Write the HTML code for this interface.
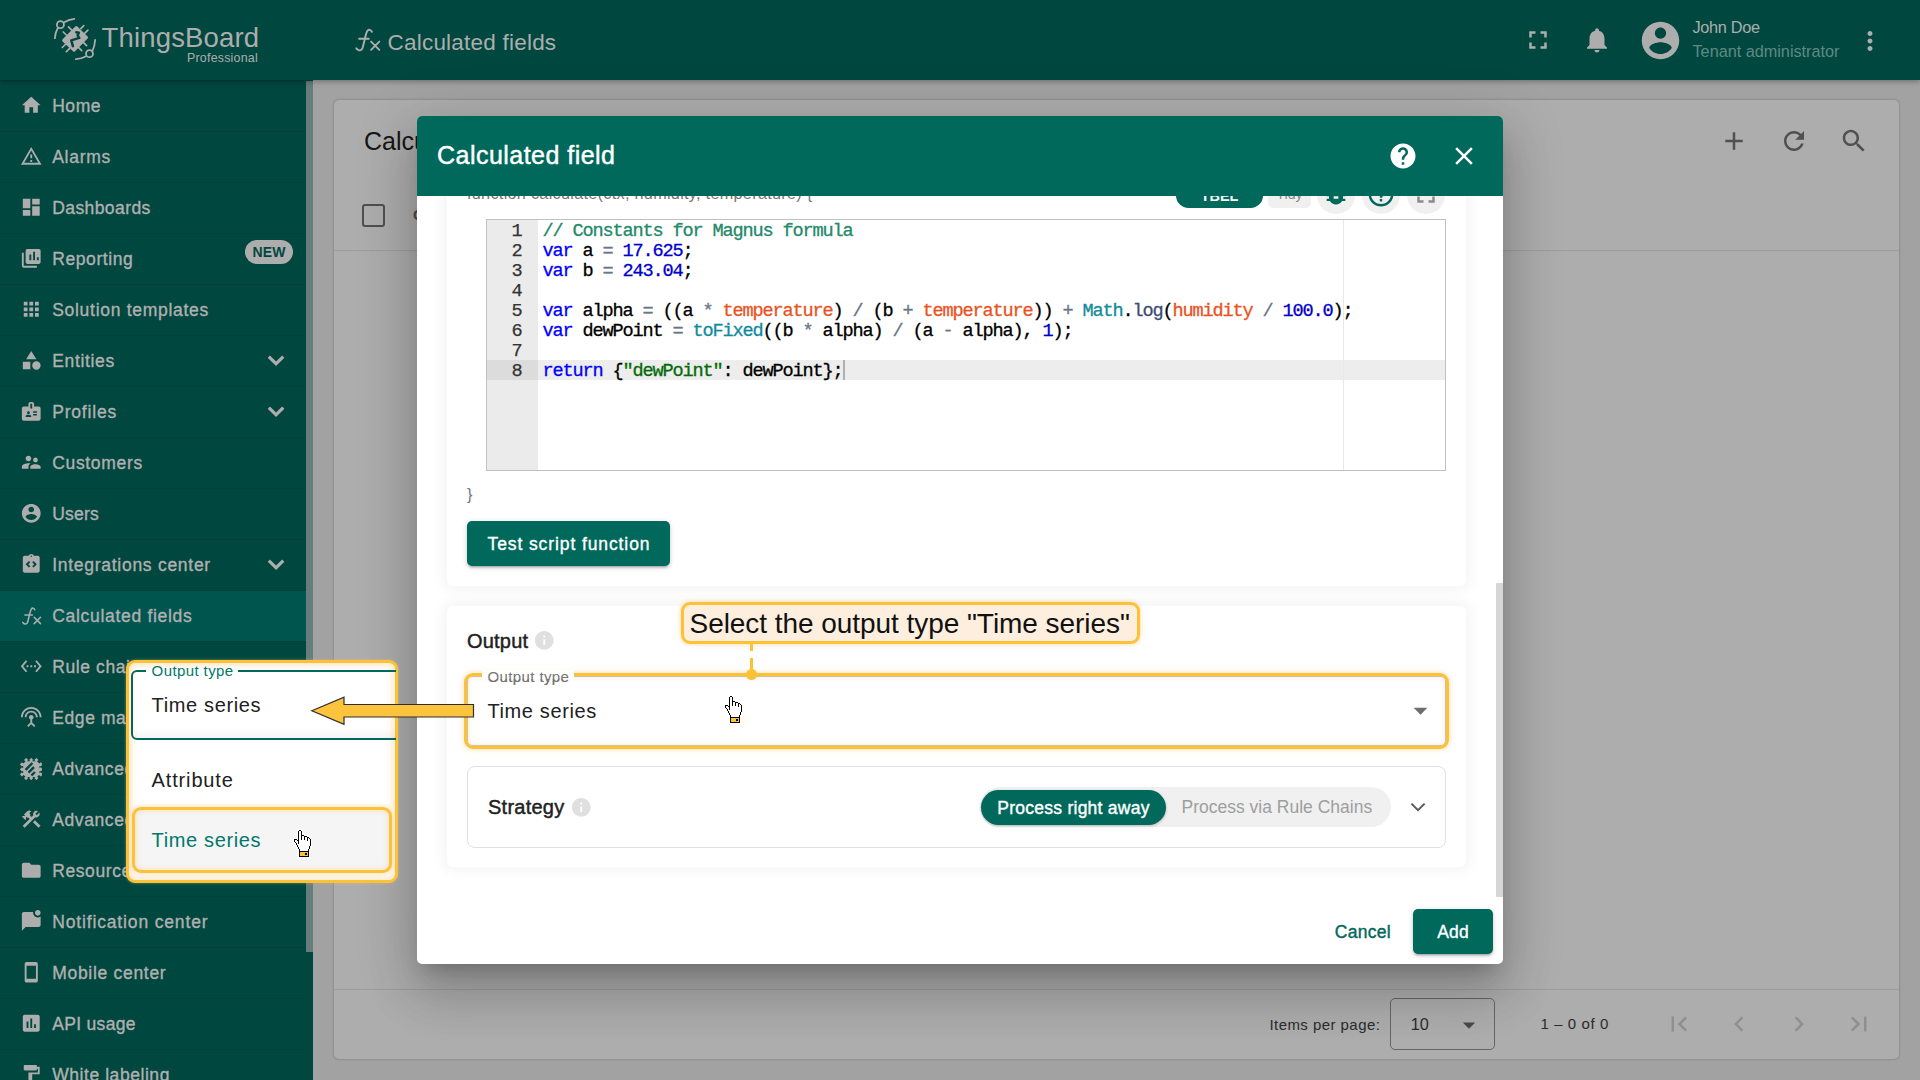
<!DOCTYPE html>
<html><head><meta charset="utf-8"><title>Calculated fields</title>
<style>
*{box-sizing:border-box}
html,body{margin:0;padding:0}
body{width:1920px;height:1080px;overflow:hidden;position:relative;background:#a2a2a2;font-family:"Liberation Sans",sans-serif;color:#222}
.abs{position:absolute}
svg{display:block}
/* ---------- top bar ---------- */
#topbar{position:absolute;left:0;top:0;width:1920px;height:80px;background:#00473f;z-index:5;box-shadow:0 2px 5px rgba(0,0,0,.28)}
#topbar svg{fill:#adadad;position:absolute}
.tb-title{position:absolute;left:387.5px;top:29px;font-size:22.5px;line-height:28px;color:#adadad;letter-spacing:.22px;white-space:nowrap}
.usr1{position:absolute;left:1692.5px;top:17px;font-size:16.3px;line-height:20px;color:#adadad;white-space:nowrap;letter-spacing:-.3px}
.usr2{position:absolute;left:1692.5px;top:41px;font-size:16.3px;line-height:20px;color:#5f8a84;white-space:nowrap;letter-spacing:-.03px}
.logo-t{position:absolute;left:101.5px;top:22px;font-size:27.5px;line-height:32px;color:#adadad;white-space:nowrap;letter-spacing:.17px}
.logo-p{position:absolute;left:187px;top:51px;font-size:12.4px;line-height:14px;color:#adadad;white-space:nowrap;letter-spacing:.23px}
/* ---------- sidebar ---------- */
#side{position:absolute;left:0;top:80px;width:306px;height:1000px;background:#00473f;z-index:2}
#sidescroll{position:absolute;left:306px;top:81px;width:7px;height:870.500px;background:#657e7b;z-index:2}
#sidetrack{position:absolute;left:306px;top:80px;width:7px;height:1000px;background:#00473f;z-index:1}
.row{position:absolute;left:0;width:306px;height:51px;border-top:1px solid #00423a;color:#b0b0b0;z-index:3}
.row.act{background:#00554f}
.row .ic{position:absolute;left:20px;top:13.100px;width:22.5px;height:22.5px;fill:#adadad;color:#adadad}
.row .lbl{position:absolute;left:52.2px;top:14px;font-size:17.5px;line-height:22px;white-space:nowrap;-webkit-text-stroke:.35px #b0b0b0}
.row .chev{position:absolute;left:260.5px;top:10px;width:30px;height:30px;fill:#adadad}
.new{position:absolute;left:244.700px;top:5.7px;width:48.6px;height:24.5px;border-radius:13px;background:#adadad;color:#00473f;font-weight:700;font-size:14px;line-height:25px;text-align:center;letter-spacing:.1px}
/* ---------- page card ---------- */
#card{position:absolute;left:334px;top:100px;width:1565px;height:959px;background:#adadad;border-radius:5px;box-shadow:0 0 2.500px rgba(0,0,0,.3)}
.hline{position:absolute;left:0;width:100%;height:1px;background:#9c9c9c}
#card svg{position:absolute;fill:#505050}
</style></head>
<body>
<!-- sidebar -->
<div id="side"></div><div id="sidetrack"></div><div id="sidescroll"></div>
<div class="row" style="top:80px"><svg class="ic" viewBox="0 0 24 24"><path d="M10 20v-6h4v6h5v-8h3L12 3 2 12h3v8z"/></svg><span class="lbl" style="letter-spacing:0.537px">Home</span></div>
<div class="row" style="top:131px"><svg class="ic" viewBox="0 0 24 24"><path d="M12 5.99L19.53 19H4.47L12 5.99M12 2L1 21h22L12 2zm1 14h-2v2h2v-2zm0-6h-2v4h2v-4z"/></svg><span class="lbl" style="letter-spacing:0.729px">Alarms</span></div>
<div class="row" style="top:182px"><svg class="ic" viewBox="0 0 24 24"><path d="M3 13h8V3H3v10zm0 8h8v-6H3v6zm10 0h8V11h-8v10zm0-18v6h8V3h-8z"/></svg><span class="lbl" style="letter-spacing:0.414px">Dashboards</span></div>
<div class="row" style="top:233px"><svg class="ic" viewBox="0 0 24 24"><path d="M4 6H2v14c0 1.1.9 2 2 2h14v-2H4V6zM20 2H8c-1.1 0-2 .9-2 2v12c0 1.1.9 2 2 2h12c1.1 0 2-.9 2-2V4c0-1.1-.9-2-2-2zM12 14h-2V8h2v6zm4 0h-2V5h2v9zm4 0h-2v-3h2v3z"/></svg><span class="lbl" style="letter-spacing:0.589px">Reporting</span><span class="new">NEW</span></div>
<div class="row" style="top:284px"><svg class="ic" viewBox="0 0 24 24"><path d="M4 8h4V4H4v4zm6 12h4v-4h-4v4zm-6 0h4v-4H4v4zm0-6h4v-4H4v4zm6 0h4v-4h-4v4zm6-10v4h4V4h-4zm-6 4h4V4h-4v4zm6 6h4v-4h-4v4zm0 6h4v-4h-4v4z"/></svg><span class="lbl" style="letter-spacing:0.713px">Solution templates</span></div>
<div class="row" style="top:335px"><svg class="ic" viewBox="0 0 24 24"><path d="M12 2l-5.5 9h11zM17.5 13a4.5 4.5 0 1 0 0 9 4.5 4.5 0 1 0 0-9zM3 13.5h8v8H3z"/></svg><span class="lbl" style="letter-spacing:0.658px">Entities</span><svg class="chev" viewBox="0 0 30 30"><path d="M8.960 9.500L15.050 15.600 21.140 9.500 23.400 11.750 15.050 20.100 6.700 11.750z"/></svg></div>
<div class="row" style="top:386px"><svg class="ic" viewBox="0 0 24 24"><path d="M20 7h-5V4c0-1.1-.9-2-2-2h-2c-1.1 0-2 .9-2 2v3H4c-1.1 0-2 .9-2 2v11c0 1.1.9 2 2 2h16c1.1 0 2-.9 2-2V9c0-1.1-.9-2-2-2zM9 12c.83 0 1.5.67 1.5 1.5S9.83 15 9 15s-1.5-.67-1.5-1.5S8.17 12 9 12zm3 6H6v-.75c0-1 2-1.5 3-1.5s3 .5 3 1.5V18zm1-9h-2V4h2v5zm5 7.5h-4V15h4v1.5zm0-3h-4V12h4v1.5z"/></svg><span class="lbl" style="letter-spacing:0.806px">Profiles</span><svg class="chev" viewBox="0 0 30 30"><path d="M8.960 9.500L15.050 15.600 21.140 9.500 23.400 11.750 15.050 20.100 6.700 11.750z"/></svg></div>
<div class="row" style="top:437px"><svg class="ic" viewBox="0 0 24 24"><path d="M16.5 12c1.38 0 2.49-1.12 2.49-2.5S17.88 7 16.5 7C15.12 7 14 8.12 14 9.5s1.12 2.5 2.5 2.5zM9 11c1.66 0 2.99-1.34 2.99-3S10.66 5 9 5C7.34 5 6 6.34 6 8s1.34 3 3 3zm7.5 3c-1.83 0-5.5.92-5.5 2.75V19h11v-2.25c0-1.83-3.67-2.75-5.5-2.75zM9 13c-2.33 0-7 1.17-7 3.5V19h7v-2.25c0-.85.33-2.34 2.37-3.47C10.5 13.1 9.66 13 9 13z"/></svg><span class="lbl" style="letter-spacing:0.674px">Customers</span></div>
<div class="row" style="top:488px"><svg class="ic" viewBox="0 0 24 24"><path d="M12 2C6.48 2 2 6.48 2 12s4.48 10 10 10 10-4.48 10-10S17.52 2 12 2zm0 3c1.66 0 3 1.34 3 3s-1.34 3-3 3-3-1.34-3-3 1.34-3 3-3zm0 14.2c-2.5 0-4.71-1.28-6-3.22.03-1.99 4-3.08 6-3.08 1.99 0 5.97 1.09 6 3.08-1.29 1.94-3.5 3.22-6 3.22z"/></svg><span class="lbl" style="letter-spacing:0.224px">Users</span></div>
<div class="row" style="top:539px"><svg class="ic" viewBox="0 0 24 24"><path d="M19 3h-4.18C14.4 1.84 13.3 1 12 1s-2.4.84-2.82 2H5c-1.1 0-2 .9-2 2v14c0 1.1.9 2 2 2h14c1.1 0 2-.9 2-2V5c0-1.1-.9-2-2-2zm-8 11.17l-1.41 1.42L6 12l3.59-3.59L11 9.83 8.83 12 11 14.17zm1-9.92c-.41 0-.75-.34-.75-.75s.34-.75.75-.75.75.34.75.75-.34.75-.75.75zm2.41 11.34L13 14.17 15.17 12 13 9.83l1.41-1.42L18 12l-3.59 3.59z"/></svg><span class="lbl" style="letter-spacing:0.725px">Integrations center</span><svg class="chev" viewBox="0 0 30 30"><path d="M8.960 9.500L15.050 15.600 21.140 9.500 23.400 11.750 15.050 20.100 6.700 11.750z"/></svg></div>
<div class="row act" style="top:590px"><svg class="ic" style="left:20.800px;top:15.100px;width:21.600px;height:21.600px" viewBox="0 0 28 28"><path d="M17.900 4.900c-.7-2.300-3.300-2.900-4.600-.9-.9 1.400-1.400 3.600-2 6l-2.300 9.500c-.7 2.900-2 4.300-3.800 3.800-1.200-.3-2.100-1-2.900-2M5.100 11.750h9.650M17.100 14.600l8.200 8.200M25.300 14.600l-8.200 8.200" fill="none" stroke="currentColor" stroke-width="2" stroke-linecap="round" stroke-linejoin="round"/></svg><span class="lbl" style="letter-spacing:0.700px">Calculated fields</span></div>
<div class="row" style="top:641px"><svg class="ic" viewBox="0 0 24 24"><path d="M7.77 6.76L6.23 5.48.82 12l5.41 6.52 1.54-1.28L3.42 12l4.35-5.24zM7 13h2v-2H7v2zm10-2h-2v2h2v-2zm-6 2h2v-2h-2v2zm6.77-7.52l-1.54 1.28L20.58 12l-4.35 5.24 1.54 1.28L23.18 12l-5.41-6.52z"/></svg><span class="lbl" style="letter-spacing:0.600px">Rule chains</span></div>
<div class="row" style="top:692px"><svg class="ic" viewBox="0 0 24 24"><path d="M12 5c-3.87 0-7 3.13-7 7h2c0-2.76 2.24-5 5-5s5 2.24 5 5h2c0-3.87-3.13-7-7-7zm1 9.29c.88-.39 1.5-1.26 1.5-2.29 0-1.38-1.12-2.5-2.5-2.5S9.500 10.62 9.500 12c0 1.02.62 1.9 1.5 2.29v3.3L7.590 21 9 22.410l3-3 3 3L16.410 21 13 17.590v-3.300zM12 1C5.930 1 1 5.930 1 12h2c0-4.970 4.030-9 9-9s9 4.030 9 9h2c0-6.070-4.930-11-11-11z"/></svg><span class="lbl" style="letter-spacing:0.600px">Edge management</span><svg class="chev" viewBox="0 0 30 30"><path d="M8.960 9.500L15.050 15.600 21.140 9.500 23.400 11.750 15.050 20.100 6.700 11.750z"/></svg></div>
<div class="row" style="top:743px"><svg class="ic" style="left:19.9px;top:14px;width:22.6px;height:22px" viewBox="0 0 22.600 22"><path d="M5.700 3.200h11.300l2.500 2.500v10.800l-2.500 2.500H5.700l-2.500-2.500V5.700zM6.1 -0.10l2.1 2.1-2.1 2.1-2.1-2.1zM6.1 18.00l2.1 2.1-2.1 2.1-2.1-2.1zM11.2 -0.10l2.1 2.1-2.1 2.1-2.1-2.1zM11.2 18.00l2.1 2.1-2.1 2.1-2.1-2.1zM16.4 -0.10l2.1 2.1-2.1 2.1-2.1-2.1zM16.4 18.00l2.1 2.1-2.1 2.1-2.1-2.1zM2.0 4.20l2.1 2.1-2.1 2.1-2.1-2.1zM20.7 4.20l2.1 2.1-2.1 2.1-2.1-2.1zM2.0 9.20l2.1 2.1-2.1 2.1-2.1-2.1zM20.7 9.20l2.1 2.1-2.1 2.1-2.1-2.1zM2.0 14.30l2.1 2.1-2.1 2.1-2.1-2.1zM20.7 14.30l2.1 2.1-2.1 2.1-2.1-2.1z"/><path d="M5.600 11.800l6.800-6.800M8.500 14.700l5.500-5.500M11.400 17.500l3.500-3.500" fill="none" stroke="#00473f" stroke-width="2.400"/></svg><span class="lbl" style="letter-spacing:0.600px">Advanced features</span><svg class="chev" viewBox="0 0 30 30"><path d="M8.960 9.500L15.050 15.600 21.140 9.500 23.400 11.750 15.050 20.100 6.700 11.750z"/></svg></div>
<div class="row" style="top:794px"><svg class="ic" viewBox="0 0 24 24"><path d="M13.783 15.172l2.121-2.121 5.996 5.996-2.121 2.121zM17.5 10c1.930 0 3.500-1.570 3.500-3.500 0-.58-.16-1.120-.41-1.600l-2.700 2.700-1.490-1.490 2.700-2.700c-.48-.25-1.020-.41-1.600-.41C15.570 3 14 4.570 14 6.500c0 .41.080.8.21 1.160l-1.850 1.850-1.780-1.780.71-.71-1.410-1.410L12 3.490c-1.170-1.170-3.070-1.170-4.240 0L4.220 7.030l1.410 1.410H2.810l-.71.71 3.540 3.540.71-.71V9.150l1.410 1.410.71-.71 1.780 1.780-7.410 7.410 2.120 2.120L16.340 9.790c.36.13.75.21 1.160.21z"/></svg><span class="lbl" style="letter-spacing:0.600px">Advanced settings</span><svg class="chev" viewBox="0 0 30 30"><path d="M8.960 9.500L15.050 15.600 21.140 9.500 23.400 11.750 15.050 20.100 6.700 11.750z"/></svg></div>
<div class="row" style="top:845px"><svg class="ic" viewBox="0 0 24 24"><path d="M10 4H4c-1.1 0-1.99.9-1.99 2L2 18c0 1.1.9 2 2 2h16c1.1 0 2-.9 2-2V8c0-1.1-.9-2-2-2h-8l-2-2z"/></svg><span class="lbl" style="letter-spacing:0.600px">Resources</span><svg class="chev" viewBox="0 0 30 30"><path d="M8.960 9.500L15.050 15.600 21.140 9.500 23.400 11.750 15.050 20.100 6.700 11.750z"/></svg></div>
<div class="row" style="top:896px"><svg class="ic" viewBox="0 0 24 24"><path d="M22 6.98V16c0 1.1-.9 2-2 2H6l-4 4V4c0-1.1.9-2 2-2h10.1c-.06.32-.1.66-.1 1 0 2.760 2.240 5 5 5 1.130 0 2.160-.39 3-1.020zM16 3c0 1.660 1.340 3 3 3s3-1.340 3-3-1.340-3-3-3-3 1.340-3 3z"/></svg><span class="lbl" style="letter-spacing:0.851px">Notification center</span></div>
<div class="row" style="top:947px"><svg class="ic" viewBox="0 0 24 24"><path d="M17 1.01L7 1c-1.1 0-2 .9-2 2v18c0 1.1.9 2 2 2h10c1.1 0 2-.9 2-2V3c0-1.1-.9-1.99-2-1.990zM17 19H7V5h10v14z"/></svg><span class="lbl" style="letter-spacing:0.703px">Mobile center</span></div>
<div class="row" style="top:998px"><svg class="ic" viewBox="0 0 24 24"><path d="M19 3H5c-1.1 0-2 .9-2 2v14c0 1.1.9 2 2 2h14c1.1 0 2-.9 2-2V5c0-1.1-.9-2-2-2zM9 17H7v-7h2v7zm4 0h-2V7h2v10zm4 0h-2v-4h2v4z"/></svg><span class="lbl" style="letter-spacing:0.319px">API usage</span></div>
<div class="row" style="top:1049px"><svg class="ic" viewBox="0 0 24 24"><path d="M18 4V3c0-.55-.45-1-1-1H5c-.55 0-1 .45-1 1v4c0 .55.45 1 1 1h12c.55 0 1-.45 1-1V6h1v4H9v11c0 .55.45 1 1 1h2c.55 0 1-.45 1-1v-9h8V4h-3z"/></svg><span class="lbl" style="letter-spacing:0.560px">White labeling</span></div>
<!-- top bar -->
<div id="topbar">
  <svg style="left:48px;top:12px;width:56px;height:56px" viewBox="0 0 56 56"><g fill="none" stroke="#adadad" stroke-width="1.8" stroke-linecap="round">
<circle cx="12.4" cy="12.7" r="3.500"/><path d="M15.800 10.400C19 8.400 22.500 7.300 26.300 6.900M9.800 16C8.100 19 7.100 22.500 6.900 26.200"/>
<circle cx="41.500" cy="41.700" r="3.500"/><path d="M44.400 38.800C46 35.600 46.900 32 47.100 28M38.200 44.300C35 46 31.500 47 27.900 47.200"/>
<path d="M20.500 14.800l3 3M15.300 20l3 3M35.800 13.700l-3 3M39.900 18.100l-3 3M38.600 33.700l-3-3M33.700 38.600l-3-3M14.300 35.500l3-3M18.400 39.700l3-3" stroke-width="1.700"/></g>
<path d="M27.300 14.600a1.500 1.500 0 0 1 2.100 0L39.600 24.500a1.500 1.500 0 0 1 0 2.100L27.100 39.300a1.500 1.500 0 0 1-2.100 0L14.600 29.400a1.500 1.500 0 0 1 0-2.100z" fill="#adadad" stroke="none"/>
<path d="M28.300 20.300l2.600.5-1.300 2.600 1.700 2.500-8 2.500 1.600 5.700" fill="none" stroke="#00473f" stroke-width="2.500" stroke-linecap="round" stroke-linejoin="round"/></svg>
  <div class="logo-t">ThingsBoard</div>
  <div class="logo-p">Professional</div>
  <svg style="left:354px;top:27px;width:28px;height:28px" viewBox="0 0 28 28"><path d="M17.900 4.900c-.7-2.300-3.300-2.900-4.600-.9-.9 1.400-1.400 3.600-2 6l-2.300 9.500c-.7 2.900-2 4.300-3.800 3.800-1.200-.3-2.100-1-2.900-2M5.100 11.750h9.650M17.100 14.600l8.200 8.200M25.300 14.600l-8.200 8.200" fill="none" stroke="#adadad" stroke-width="1.900" stroke-linecap="round" stroke-linejoin="round"/></svg>
  <div class="tb-title">Calculated fields</div>
  <svg style="left:1522.500px;top:25px;width:30px;height:30px" viewBox="0 0 24 24"><path d="M7 14H5v5h5v-2H7v-3zm-2-4h2V7h3V5H5v5zm12 7h-3v2h5v-5h-2v3zM14 5v2h3v3h2V5h-5z"/></svg>
  <svg style="left:1582px;top:25px;width:30px;height:30px" viewBox="0 0 24 24"><path d="M12 22c1.1 0 2-.9 2-2h-4c0 1.1.89 2 2 2zm6-6v-5c0-3.070-1.640-5.640-4.500-6.320V4c0-.83-.67-1.500-1.500-1.500s-1.500.67-1.500 1.500v.68C7.630 5.360 6 7.920 6 11v5l-2 2v1h16v-1l-2-2z"/></svg>
  <svg style="left:1637.500px;top:18px;width:45px;height:45px" viewBox="0 0 24 24"><path d="M12 2C6.480 2 2 6.480 2 12s4.480 10 10 10 10-4.480 10-10S17.520 2 12 2zm0 3c1.660 0 3 1.340 3 3s-1.340 3-3 3-3-1.340-3-3 1.340-3 3-3zm0 14.200c-2.500 0-4.710-1.280-6-3.220.03-1.990 4-3.080 6-3.080 1.990 0 5.970 1.090 6 3.080-1.290 1.940-3.500 3.220-6 3.220z"/></svg>
  <div class="usr1">John Doe</div>
  <div class="usr2">Tenant administrator</div>
  <svg style="left:1855px;top:25.500px;width:30px;height:30px" viewBox="0 0 24 24"><path d="M12 8c1.1 0 2-.9 2-2s-.9-2-2-2-2 .9-2 2 .9 2 2 2zm0 2c-1.1 0-2 .9-2 2s.9 2 2 2 2-.9 2-2-.9-2-2-2zm0 6c-1.1 0-2 .9-2 2s.9 2 2 2 2-.9 2-2-.9-2-2-2z"/></svg>
</div>
<!-- page card (dimmed) -->
<div id="card">
  <div class="abs" style="left:30px;top:26px;font-size:25px;line-height:30px;color:#161616;white-space:nowrap">Calculated fields</div>
  <svg style="left:1385px;top:26px;width:30px;height:30px" viewBox="0 0 24 24"><path d="M19 13h-6v6h-2v-6H5v-2h6V5h2v6h6v2z"/></svg>
  <svg style="left:1445px;top:26px;width:30px;height:30px" viewBox="0 0 24 24"><path d="M17.650 6.350C16.200 4.900 14.210 4 12 4c-4.420 0-7.990 3.580-7.990 8s3.570 8 7.990 8c3.730 0 6.840-2.550 7.730-6h-2.080c-.82 2.330-3.040 4-5.650 4-3.310 0-6-2.690-6-6s2.690-6 6-6c1.660 0 3.140.69 4.220 1.780L13 11h7V4l-2.350 2.350z"/></svg>
  <svg style="left:1504.800px;top:26px;width:30px;height:30px" viewBox="0 0 24 24"><path d="M15.500 14h-.79l-.28-.27C15.410 12.590 16 11.110 16 9.500 16 5.910 13.090 3 9.500 3S3 5.910 3 9.500 5.910 16 9.500 16c1.610 0 3.090-.59 4.230-1.570l.27.28v.79l5 4.990L20.490 19l-4.990-5zm-6 0C7.010 14 5 11.990 5 9.500S7.010 5 9.500 5 14 7.010 14 9.500 11.990 14 9.500 14z"/></svg>
  <div class="abs" style="left:28px;top:104px;width:23px;height:23px;border:2.500px solid #4f4f4f;border-radius:3px"></div>
  <div class="abs" style="left:79px;top:104px;font-size:15px;line-height:22px;font-weight:700;color:#4a4a4a">Created time</div>
  <div class="hline" style="top:150px"></div>
  <div class="hline" style="top:889px"></div>
    <div class="abs" style="left:935.400px;top:916px;font-size:15px;line-height:18px;color:#2b2b2b;white-space:nowrap;letter-spacing:.45px">Items per page:</div>
  <div class="abs" style="left:1056px;top:898px;width:105px;height:52px;border:1px solid #666;border-radius:5px"></div>
  <div class="abs" style="left:1076.700px;top:914px;font-size:16.250px;line-height:20px;color:#2b2b2b;white-space:nowrap">10</div>
  <svg style="left:1120px;top:910px;width:30px;height:30px" viewBox="0 0 24 24"><path fill="#4a4a4a" d="M7 10l5 5 5-5z"/></svg>
  <div class="abs" style="left:1206.500px;top:915px;font-size:15px;line-height:18px;color:#2b2b2b;white-space:nowrap;letter-spacing:.58px">1 – 0 of 0</div>
  <svg style="left:1330px;top:909px;width:30px;height:30px" viewBox="0 0 24 24"><path fill="#8f8f8f" d="M18.410 16.590L13.820 12l4.590-4.590L17 6l-6 6 6 6zM6 6h2v12H6z"/></svg>
  <svg style="left:1390px;top:909px;width:30px;height:30px" viewBox="0 0 24 24"><path fill="#8f8f8f" d="M15.410 7.410L14 6l-6 6 6 6 1.410-1.410L10.830 12z"/></svg>
  <svg style="left:1450px;top:909px;width:30px;height:30px" viewBox="0 0 24 24"><path fill="#8f8f8f" d="M10 6L8.590 7.410 13.170 12l-4.580 4.590L10 18l6-6z"/></svg>
  <svg style="left:1510px;top:909px;width:30px;height:30px" viewBox="0 0 24 24"><path fill="#8f8f8f" d="M5.590 7.410L10.180 12l-4.590 4.590L7 18l6-6-6-6zM16 6h2v12h-2z"/></svg>

</div>
<style>
#dlg{position:absolute;left:417px;top:116px;width:1086px;height:848px;background:#fff;border-radius:5px;z-index:10;box-shadow:0 14px 19px -9px rgba(0,0,0,.2),0 30px 48px 4px rgba(0,0,0,.14),0 11px 58px 10px rgba(0,0,0,.12)}
#dlgh{position:absolute;left:0;top:0;width:1086px;height:80px;background:#00695c;border-radius:5px 5px 0 0;z-index:3}
#dlgh .t{position:absolute;left:20px;top:24px;font-size:25px;line-height:30px;color:#fff;white-space:nowrap;letter-spacing:.47px;-webkit-text-stroke:.45px #fff}
#dlgc{position:absolute;left:0;top:80px;width:1086px;height:701px;overflow:hidden;z-index:1}
#dlgc .in{position:absolute;left:-417px;top:-196px;width:1920px;height:1080px} /* page coordinates inside */
.sect{position:absolute;left:447px;width:1019px;background:#fff;border-radius:6px;box-shadow:0 0 12px 5px rgba(0,0,0,.04)}
.sb-thumb{position:absolute;left:1496px;top:583px;width:7px;height:314px;background:#d6d6d6}
.teal{color:#00695c}
.btn{position:absolute;background:#00695c;color:#fff;border-radius:5px;font-size:17.5px;white-space:nowrap;-webkit-text-stroke:.35px #fff;box-shadow:0 3px 2px -2px rgba(0,0,0,.2),0 2px 3px rgba(0,0,0,.14),0 1px 6px rgba(0,0,0,.12)}
/* code editor */
#ace{position:absolute;left:486px;top:219px;width:960px;height:252px;border:1px solid #c0c0c0;background:#fff;overflow:hidden}
#ace .gut{position:absolute;left:0;top:0;width:51px;height:250px;background:#ebebeb}
#ace .actg{position:absolute;left:0;top:140px;width:51px;height:20px;background:#dcdcdc}
#ace .actl{position:absolute;left:51px;top:140px;width:907px;height:20px;background:#ededed}
#ace .pm{position:absolute;left:856px;top:0;width:1px;height:250px;background:#e8e8e8}
#ace .ln{position:absolute;left:0;width:34.4px;text-align:right;color:#333;font-family:"Liberation Mono",monospace;font-size:18.6px;letter-spacing:-1.16px;line-height:20px;height:20px;-webkit-text-stroke-width:.25px}
#ace .cl{position:absolute;left:55.6px;color:#000;font-family:"Liberation Mono",monospace;font-size:18.6px;letter-spacing:-1.16px;line-height:20px;height:20px;white-space:pre;-webkit-text-stroke-width:.3px}
.k{color:#0000ff}.n{color:#0000cd}.o{color:#687687}.c{color:#23896a}.a{color:#e9531f}.f{color:#0f8b9c}.sf{color:#3c4c72}.s{color:#036a07}
</style>
<div id="dlg">
  <div id="dlgh">
    <div class="t">Calculated field</div>
    <svg class="abs" style="left:971.400px;top:25px;width:30px;height:30px" viewBox="0 0 24 24"><path fill="#fff" d="M12 2C6.480 2 2 6.480 2 12s4.480 10 10 10 10-4.480 10-10S17.520 2 12 2zm1 17h-2v-2h2v2zm2.070-7.750l-.9.92C13.450 12.900 13 13.500 13 15h-2v-.5c0-1.100.45-2.100 1.170-2.830l1.240-1.260c.37-.36.59-.86.59-1.410 0-1.100-.9-2-2-2s-2 .9-2 2H8c0-2.210 1.790-4 4-4s4 1.790 4 4c0 .88-.36 1.680-.93 2.250z"/></svg>
    <svg class="abs" style="left:1031.500px;top:25px;width:30px;height:30px" viewBox="0 0 24 24"><path fill="#fff" d="M19 6.410L17.590 5 12 10.590 6.410 5 5 6.410 10.590 12 5 17.590 6.410 19 12 13.410 17.590 19 19 17.590 13.410 12z"/></svg>
  </div>
  <div id="dlgc"><div class="in">
    <!-- section 1 : script -->
    <div class="sect" style="top:60px;height:526px"></div>
    <div class="abs" style="left:467px;top:182.500px;font-size:16.25px;line-height:20px;color:#757575;white-space:nowrap;letter-spacing:.28px">function calculate(ctx, humidity, temperature) {</div>
    <div class="abs" style="left:1176px;top:183px;width:87px;height:25px;border-radius:12.5px;background:#00695c;color:#fff;font-weight:700;font-size:14.4px;line-height:27.6px;text-align:center">TBEL</div>
    <div class="abs" style="left:1268px;top:177.500px;width:43px;height:30px;border-radius:5px;background:#f0f0f0;color:#8a8a8a;font-size:14.2px;line-height:33px;text-align:center">Tidy</div>
    <div class="abs" style="left:1316.7px;top:175px;width:38.600px;height:38.600px;border-radius:19.300px;background:#f0f0f0"></div>
    <div class="abs" style="left:1361.7px;top:175px;width:38.600px;height:38.600px;border-radius:19.300px;background:#f0f0f0"></div>
    <div class="abs" style="left:1406.7px;top:175px;width:38.600px;height:38.600px;border-radius:19.300px;background:#f0f0f0"></div>
    <svg class="abs" style="left:1322px;top:179.500px;width:28px;height:28px" viewBox="0 0 24 24"><path fill="#00695c" d="M20 8h-2.810c-.45-.78-1.070-1.450-1.820-1.960L17 4.410 15.590 3l-2.170 2.170C12.960 5.060 12.490 5 12 5c-.49 0-.96.06-1.410.17L8.410 3 7 4.410l1.620 1.630C7.880 6.550 7.260 7.220 6.810 8H4v2h2.090c-.05.33-.09.66-.09 1v1H4v2h2v1c0 .34.04.67.09 1H4v2h2.810c1.040 1.790 2.970 3 5.190 3s4.150-1.210 5.190-3H20v-2h-2.090c.05-.33.09-.66.09-1v-1h2v-2h-2v-1c0-.34-.04-.67-.09-1H20V8zm-6 8h-4v-2h4v2zm0-4h-4v-2h4v2z"/></svg>
    <svg class="abs" style="left:1366px;top:178.500px;width:30px;height:30px" viewBox="0 0 24 24"><path fill="#00695c" d="M11 18h2v-2h-2v2zm1-16C6.480 2 2 6.480 2 12s4.480 10 10 10 10-4.480 10-10S17.520 2 12 2zm0 18c-4.410 0-8-3.590-8-8s3.590-8 8-8 8 3.590 8 8-3.590 8-8 8zm0-14c-2.210 0-4 1.790-4 4h2c0-1.100.9-2 2-2s2 .9 2 2c0 2-3 1.750-3 5h2c0-2.250 3-2.500 3-5 0-2.210-1.790-4-4-4z"/></svg>
    <svg class="abs" style="left:1411px;top:178.500px;width:30px;height:30px" viewBox="0 0 24 24"><path fill="#8a8a8a" d="M7 14H5v5h5v-2H7v-3zm-2-4h2V7h3V5H5v5zm12 7h-3v2h5v-5h-2v3zM14 5v2h3v3h2V5h-5z"/></svg>
    <div id="ace">
      <div class="gut"></div><div class="actg"></div><div class="actl"></div><div class="pm"></div>
      <div class="ln" style="top:2px">1</div><div class="cl" style="top:2px"><span class=c>// Constants for Magnus formula</span></div>
<div class="ln" style="top:22px">2</div><div class="cl" style="top:22px"><span class=k>var</span> a <span class=o>=</span> <span class=n>17.625</span>;</div>
<div class="ln" style="top:42px">3</div><div class="cl" style="top:42px"><span class=k>var</span> b <span class=o>=</span> <span class=n>243.04</span>;</div>
<div class="ln" style="top:62px">4</div><div class="cl" style="top:62px"></div>
<div class="ln" style="top:82px">5</div><div class="cl" style="top:82px"><span class=k>var</span> alpha <span class=o>=</span> ((a <span class=o>*</span> <span class=a>temperature</span>) <span class=o>/</span> (b <span class=o>+</span> <span class=a>temperature</span>)) <span class=o>+</span> <span class=f>Math</span>.<span class=sf>log</span>(<span class=a>humidity</span> <span class=o>/</span> <span class=n>100.0</span>);</div>
<div class="ln" style="top:102px">6</div><div class="cl" style="top:102px"><span class=k>var</span> dewPoint <span class=o>=</span> <span class=f>toFixed</span>((b <span class=o>*</span> alpha) <span class=o>/</span> (a <span class=o>-</span> alpha), <span class=n>1</span>);</div>
<div class="ln" style="top:122px">7</div><div class="cl" style="top:122px"></div>
<div class="ln" style="top:142px">8</div><div class="cl" style="top:142px"><span class=k>return</span> {<span class=s>"dewPoint"</span>: dewPoint};</div>
<div class="abs" style="left:356.300px;top:140px;width:1.500px;height:20px;background:#b0b0b0"></div>
    </div>
    <div class="abs" style="left:467px;top:484px;font-size:16.25px;line-height:20px;color:#757575">}</div>
    <div class="btn" style="left:467px;top:521px;width:203px;height:45px;line-height:47.600px;text-align:center;letter-spacing:.9px;padding-left:.9px">Test script function</div>
    <!-- section 2 : output -->
    <div class="sect" style="top:606px;height:261px"></div>
    <div class="abs" style="left:467px;top:629px;font-size:20px;line-height:24px;color:#212121;white-space:nowrap;letter-spacing:.2px;-webkit-text-stroke:.45px #212121">Output</div>
    <svg class="abs" style="left:533.300px;top:629.100px;width:22.500px;height:22.500px" viewBox="0 0 24 24"><path fill="#e0e0e0" d="M12 2C6.480 2 2 6.480 2 12s4.480 10 10 10 10-4.480 10-10S17.520 2 12 2zm1 15h-2v-6h2v6zm0-8h-2V7h2v2z"/></svg>
    <!-- select (under highlight) -->
    <div class="abs" style="left:467px;top:675.500px;width:979px;height:70.500px;border:1px solid #c2c2c2;border-radius:5px"></div>
    <div class="abs" style="left:487.400px;top:668px;font-size:15px;line-height:18px;color:#757575;white-space:nowrap;letter-spacing:.4px">Output type</div>
    <div class="abs" style="left:487.400px;top:698px;font-size:20px;line-height:26px;color:#212121;white-space:nowrap;letter-spacing:.63px">Time series</div>
    <svg class="abs" style="left:1403.500px;top:694.250px;width:33px;height:33px" viewBox="0 0 24 24"><path fill="#6e6e6e" d="M7 10l5 5 5-5z"/></svg>
    <!-- strategy panel -->
    <div class="abs" style="left:467px;top:766px;width:979px;height:82px;border:1px solid #e0e0e0;border-radius:8px"></div>
    <div class="abs" style="left:488px;top:795px;font-size:20px;line-height:24px;color:#212121;white-space:nowrap;letter-spacing:.25px;-webkit-text-stroke:.45px #212121">Strategy</div>
    <svg class="abs" style="left:570.300px;top:795.500px;width:22.500px;height:22.500px" viewBox="0 0 24 24"><path fill="#e0e0e0" d="M12 2C6.480 2 2 6.480 2 12s4.480 10 10 10 10-4.480 10-10S17.520 2 12 2zm1 15h-2v-6h2v6zm0-8h-2V7h2v2z"/></svg>
    <div class="abs" style="left:980px;top:787px;width:411px;height:40px;border-radius:20px;background:#f0f0f0"></div>
    <div class="abs" style="left:981px;top:790px;width:185px;height:34.500px;border-radius:17.500px;background:#00695c;color:#fff;font-size:17.500px;line-height:36.600px;text-align:center;white-space:nowrap;letter-spacing:.26px;-webkit-text-stroke:.4px #fff;box-shadow:0 1px 3px rgba(0,0,0,.25)">Process right away</div>
    <div class="abs" style="left:1181.500px;top:796px;font-size:17.500px;line-height:22px;color:#9e9e9e;white-space:nowrap">Process via Rule Chains</div>
    <svg class="abs" style="left:1402.500px;top:792px;width:30px;height:30px" viewBox="0 0 24 24"><path fill="none" stroke="#595959" stroke-width="1.550" d="M6.700 9.300l5.300 5.300 5.300-5.300"/></svg>
    <div class="sb-thumb"></div>
  </div></div>
  <!-- actions -->
  <div class="abs teal" style="left:917.800px;top:805px;font-size:17.500px;line-height:22px;white-space:nowrap;letter-spacing:.28px;-webkit-text-stroke:.4px #00695c;z-index:2">Cancel</div>
  <div class="btn" style="left:996px;top:793px;width:80px;height:44.500px;line-height:46.500px;text-align:center;letter-spacing:.18px;z-index:2">Add</div>
</div>

<style>
.ybox{position:absolute;border:3px solid #fcc236;border-radius:9px;box-shadow:0 0 5px 1px rgba(250,190,110,.42),inset 0 0 5px 1px rgba(250,190,110,.36)}
#ov{position:absolute;left:0;top:0;width:1920px;height:1080px;z-index:20;pointer-events:none}
</style>
<div id="ov">
  <!-- highlight around select -->
  <div class="ybox" style="left:464px;top:673px;width:985px;height:76px"></div>
  <div class="abs" style="left:481.500px;top:670px;width:92px;height:9px;background:#fff"></div>
  <div class="abs" style="left:487.400px;top:668px;font-size:15px;line-height:18px;color:#757575;white-space:nowrap;letter-spacing:.4px">Output type</div>
  <!-- callout -->
  <div class="abs" style="left:750px;top:643px;width:3px;height:7.500px;background:#fcc236"></div>
  <div class="abs" style="left:750px;top:657.500px;width:3px;height:16px;background:#fcc236"></div>
  <div class="abs" style="left:746px;top:668.500px;width:11px;height:11px;border-radius:6px;background:#fcc236"></div>
  <div class="ybox" style="left:681px;top:602px;width:459px;height:41.500px;background:#fdeedd;box-shadow:0 0 4px 1px rgba(250,190,110,.45)"></div>
  <div class="abs" style="left:689.500px;top:608.300px;font-size:28px;line-height:32px;color:#111;white-space:nowrap;letter-spacing:-.05px">Select the output type "Time series"</div>
  <!-- zoom popup -->
  <div class="ybox" style="left:126px;top:660px;width:272px;height:223px;background:#fff;box-shadow:0 0 3px 0 rgba(250,190,110,.55),inset 0 0 7px 2px rgba(253,225,185,.9)"></div>
  <div class="abs" style="left:131px;top:670px;width:264.500px;height:70px;overflow:hidden">
     <div class="abs" style="left:0;top:0;width:300px;height:70px;border:2px solid #00695c;border-radius:6px"></div>
     <div class="abs" style="left:15px;top:0;width:92px;height:3px;background:#fff"></div>
     <div class="abs" style="left:2px;top:58px;width:270px;height:10px;background:linear-gradient(rgba(0,0,0,0),rgba(0,0,0,.045))"></div>
  </div>
  <div class="abs" style="left:151.600px;top:661.600px;font-size:15px;line-height:18px;color:#00796b;white-space:nowrap;letter-spacing:.4px">Output type</div>
  <div class="abs" style="left:151.600px;top:691.800px;font-size:20px;line-height:26px;color:#212121;white-space:nowrap;letter-spacing:.63px">Time series</div>
  <div class="abs" style="left:151.600px;top:766.800px;font-size:20px;line-height:26px;color:#212121;white-space:nowrap;letter-spacing:.85px">Attribute</div>
  <div class="ybox" style="left:132px;top:807px;width:260px;height:65.500px;background:#f5f5f5"></div>
  <div class="abs" style="left:151.600px;top:827px;font-size:20px;line-height:26px;color:#00796b;white-space:nowrap;letter-spacing:.63px">Time series</div>
  <!-- arrow -->
  <svg class="abs" style="left:300px;top:690px;width:180px;height:42px" viewBox="0 0 180 42"><path d="M11.800 20.700L44 7.200V14.500H173.500V27H44V34.300z" fill="#fcc43c" stroke="#2e2e2e" stroke-width="1.200" stroke-linejoin="miter"/></svg>
  <svg class="abs" style="left:724px;top:695px;width:19px;height:29px" viewBox="-1 -1 19 29" shape-rendering="crispEdges"><path d="M5 0h2v1h-2zM4 1h1v1h-1zM7 1h1v1h-1zM4 2h1v1h-1zM7 2h1v1h-1zM4 3h1v1h-1zM7 3h1v1h-1zM4 4h1v1h-1zM7 4h1v1h-1zM4 5h1v1h-1zM7 5h3v1h-3zM4 6h1v1h-1zM7 6h1v1h-1zM10 6h3v1h-3zM4 7h1v1h-1zM7 7h1v1h-1zM10 7h1v1h-1zM13 7h2v1h-2zM4 8h1v1h-1zM7 8h1v1h-1zM10 8h1v1h-1zM13 8h1v1h-1zM15 8h1v1h-1zM0 9h3v1h-3zM4 9h1v1h-1zM7 9h1v1h-1zM10 9h1v1h-1zM13 9h1v1h-1zM16 9h1v1h-1zM0 10h1v1h-1zM3 10h2v1h-2zM13 10h1v1h-1zM16 10h1v1h-1zM0 11h1v1h-1zM4 11h1v1h-1zM16 11h1v1h-1zM1 12h1v1h-1zM4 12h1v1h-1zM16 12h1v1h-1zM2 13h1v1h-1zM4 13h1v1h-1zM16 13h1v1h-1zM2 14h1v1h-1zM16 14h1v1h-1zM3 15h1v1h-1zM16 15h1v1h-1zM3 16h1v1h-1zM15 16h1v1h-1zM4 17h1v1h-1zM15 17h1v1h-1zM4 18h1v1h-1zM15 18h1v1h-1zM5 19h1v1h-1zM14 19h1v1h-1zM5 20h1v1h-1zM14 20h1v1h-1zM5 21h10v1h-10zM5 22h1v1h-1zM14 22h1v1h-1zM5 23h1v1h-1zM11 23h2v1h-2zM14 23h1v1h-1zM5 24h1v1h-1zM11 24h2v1h-2zM14 24h1v1h-1zM5 25h1v1h-1zM14 25h1v1h-1zM5 26h10v1h-10z" fill="#fff" stroke="#fff" stroke-width="2"/><path d="M5 1h2v1h-2zM5 2h2v1h-2zM5 3h2v1h-2zM5 4h2v1h-2zM5 5h2v1h-2zM5 6h2v1h-2zM8 6h2v1h-2zM5 7h2v1h-2zM8 7h2v1h-2zM11 7h2v1h-2zM5 8h2v1h-2zM8 8h2v1h-2zM11 8h2v1h-2zM14 8h1v1h-1zM5 9h2v1h-2zM8 9h2v1h-2zM11 9h2v1h-2zM14 9h2v1h-2zM1 10h2v1h-2zM5 10h8v1h-8zM14 10h2v1h-2zM1 11h3v1h-3zM5 11h11v1h-11zM2 12h2v1h-2zM5 12h11v1h-11zM3 13h1v1h-1zM5 13h11v1h-11zM3 14h13v1h-13zM4 15h12v1h-12zM4 16h11v1h-11zM5 17h10v1h-10zM5 18h10v1h-10zM6 19h8v1h-8zM6 20h8v1h-8z" fill="#fff"/><path d="M6 22h8v1h-8zM6 23h5v1h-5zM13 23h1v1h-1zM6 24h5v1h-5zM13 24h1v1h-1zM6 25h8v1h-8z" fill="#fcc43c"/><path d="M5 0h2v1h-2zM4 1h1v1h-1zM7 1h1v1h-1zM4 2h1v1h-1zM7 2h1v1h-1zM4 3h1v1h-1zM7 3h1v1h-1zM4 4h1v1h-1zM7 4h1v1h-1zM4 5h1v1h-1zM7 5h3v1h-3zM4 6h1v1h-1zM7 6h1v1h-1zM10 6h3v1h-3zM4 7h1v1h-1zM7 7h1v1h-1zM10 7h1v1h-1zM13 7h2v1h-2zM4 8h1v1h-1zM7 8h1v1h-1zM10 8h1v1h-1zM13 8h1v1h-1zM15 8h1v1h-1zM0 9h3v1h-3zM4 9h1v1h-1zM7 9h1v1h-1zM10 9h1v1h-1zM13 9h1v1h-1zM16 9h1v1h-1zM0 10h1v1h-1zM3 10h2v1h-2zM13 10h1v1h-1zM16 10h1v1h-1zM0 11h1v1h-1zM4 11h1v1h-1zM16 11h1v1h-1zM1 12h1v1h-1zM4 12h1v1h-1zM16 12h1v1h-1zM2 13h1v1h-1zM4 13h1v1h-1zM16 13h1v1h-1zM2 14h1v1h-1zM16 14h1v1h-1zM3 15h1v1h-1zM16 15h1v1h-1zM3 16h1v1h-1zM15 16h1v1h-1zM4 17h1v1h-1zM15 17h1v1h-1zM4 18h1v1h-1zM15 18h1v1h-1zM5 19h1v1h-1zM14 19h1v1h-1zM5 20h1v1h-1zM14 20h1v1h-1zM5 21h10v1h-10zM5 22h1v1h-1zM14 22h1v1h-1zM5 23h1v1h-1zM11 23h2v1h-2zM14 23h1v1h-1zM5 24h1v1h-1zM11 24h2v1h-2zM14 24h1v1h-1zM5 25h1v1h-1zM14 25h1v1h-1zM5 26h10v1h-10z" fill="#000"/></svg>
  <svg class="abs" style="left:293px;top:829px;width:19px;height:29px" viewBox="-1 -1 19 29" shape-rendering="crispEdges"><path d="M5 0h2v1h-2zM4 1h1v1h-1zM7 1h1v1h-1zM4 2h1v1h-1zM7 2h1v1h-1zM4 3h1v1h-1zM7 3h1v1h-1zM4 4h1v1h-1zM7 4h1v1h-1zM4 5h1v1h-1zM7 5h3v1h-3zM4 6h1v1h-1zM7 6h1v1h-1zM10 6h3v1h-3zM4 7h1v1h-1zM7 7h1v1h-1zM10 7h1v1h-1zM13 7h2v1h-2zM4 8h1v1h-1zM7 8h1v1h-1zM10 8h1v1h-1zM13 8h1v1h-1zM15 8h1v1h-1zM0 9h3v1h-3zM4 9h1v1h-1zM7 9h1v1h-1zM10 9h1v1h-1zM13 9h1v1h-1zM16 9h1v1h-1zM0 10h1v1h-1zM3 10h2v1h-2zM13 10h1v1h-1zM16 10h1v1h-1zM0 11h1v1h-1zM4 11h1v1h-1zM16 11h1v1h-1zM1 12h1v1h-1zM4 12h1v1h-1zM16 12h1v1h-1zM2 13h1v1h-1zM4 13h1v1h-1zM16 13h1v1h-1zM2 14h1v1h-1zM16 14h1v1h-1zM3 15h1v1h-1zM16 15h1v1h-1zM3 16h1v1h-1zM15 16h1v1h-1zM4 17h1v1h-1zM15 17h1v1h-1zM4 18h1v1h-1zM15 18h1v1h-1zM5 19h1v1h-1zM14 19h1v1h-1zM5 20h1v1h-1zM14 20h1v1h-1zM5 21h10v1h-10zM5 22h1v1h-1zM14 22h1v1h-1zM5 23h1v1h-1zM11 23h2v1h-2zM14 23h1v1h-1zM5 24h1v1h-1zM11 24h2v1h-2zM14 24h1v1h-1zM5 25h1v1h-1zM14 25h1v1h-1zM5 26h10v1h-10z" fill="#fff" stroke="#fff" stroke-width="2"/><path d="M5 1h2v1h-2zM5 2h2v1h-2zM5 3h2v1h-2zM5 4h2v1h-2zM5 5h2v1h-2zM5 6h2v1h-2zM8 6h2v1h-2zM5 7h2v1h-2zM8 7h2v1h-2zM11 7h2v1h-2zM5 8h2v1h-2zM8 8h2v1h-2zM11 8h2v1h-2zM14 8h1v1h-1zM5 9h2v1h-2zM8 9h2v1h-2zM11 9h2v1h-2zM14 9h2v1h-2zM1 10h2v1h-2zM5 10h8v1h-8zM14 10h2v1h-2zM1 11h3v1h-3zM5 11h11v1h-11zM2 12h2v1h-2zM5 12h11v1h-11zM3 13h1v1h-1zM5 13h11v1h-11zM3 14h13v1h-13zM4 15h12v1h-12zM4 16h11v1h-11zM5 17h10v1h-10zM5 18h10v1h-10zM6 19h8v1h-8zM6 20h8v1h-8z" fill="#fff"/><path d="M6 22h8v1h-8zM6 23h5v1h-5zM13 23h1v1h-1zM6 24h5v1h-5zM13 24h1v1h-1zM6 25h8v1h-8z" fill="#fcc43c"/><path d="M5 0h2v1h-2zM4 1h1v1h-1zM7 1h1v1h-1zM4 2h1v1h-1zM7 2h1v1h-1zM4 3h1v1h-1zM7 3h1v1h-1zM4 4h1v1h-1zM7 4h1v1h-1zM4 5h1v1h-1zM7 5h3v1h-3zM4 6h1v1h-1zM7 6h1v1h-1zM10 6h3v1h-3zM4 7h1v1h-1zM7 7h1v1h-1zM10 7h1v1h-1zM13 7h2v1h-2zM4 8h1v1h-1zM7 8h1v1h-1zM10 8h1v1h-1zM13 8h1v1h-1zM15 8h1v1h-1zM0 9h3v1h-3zM4 9h1v1h-1zM7 9h1v1h-1zM10 9h1v1h-1zM13 9h1v1h-1zM16 9h1v1h-1zM0 10h1v1h-1zM3 10h2v1h-2zM13 10h1v1h-1zM16 10h1v1h-1zM0 11h1v1h-1zM4 11h1v1h-1zM16 11h1v1h-1zM1 12h1v1h-1zM4 12h1v1h-1zM16 12h1v1h-1zM2 13h1v1h-1zM4 13h1v1h-1zM16 13h1v1h-1zM2 14h1v1h-1zM16 14h1v1h-1zM3 15h1v1h-1zM16 15h1v1h-1zM3 16h1v1h-1zM15 16h1v1h-1zM4 17h1v1h-1zM15 17h1v1h-1zM4 18h1v1h-1zM15 18h1v1h-1zM5 19h1v1h-1zM14 19h1v1h-1zM5 20h1v1h-1zM14 20h1v1h-1zM5 21h10v1h-10zM5 22h1v1h-1zM14 22h1v1h-1zM5 23h1v1h-1zM11 23h2v1h-2zM14 23h1v1h-1zM5 24h1v1h-1zM11 24h2v1h-2zM14 24h1v1h-1zM5 25h1v1h-1zM14 25h1v1h-1zM5 26h10v1h-10z" fill="#000"/></svg>
</div>

</body></html>
